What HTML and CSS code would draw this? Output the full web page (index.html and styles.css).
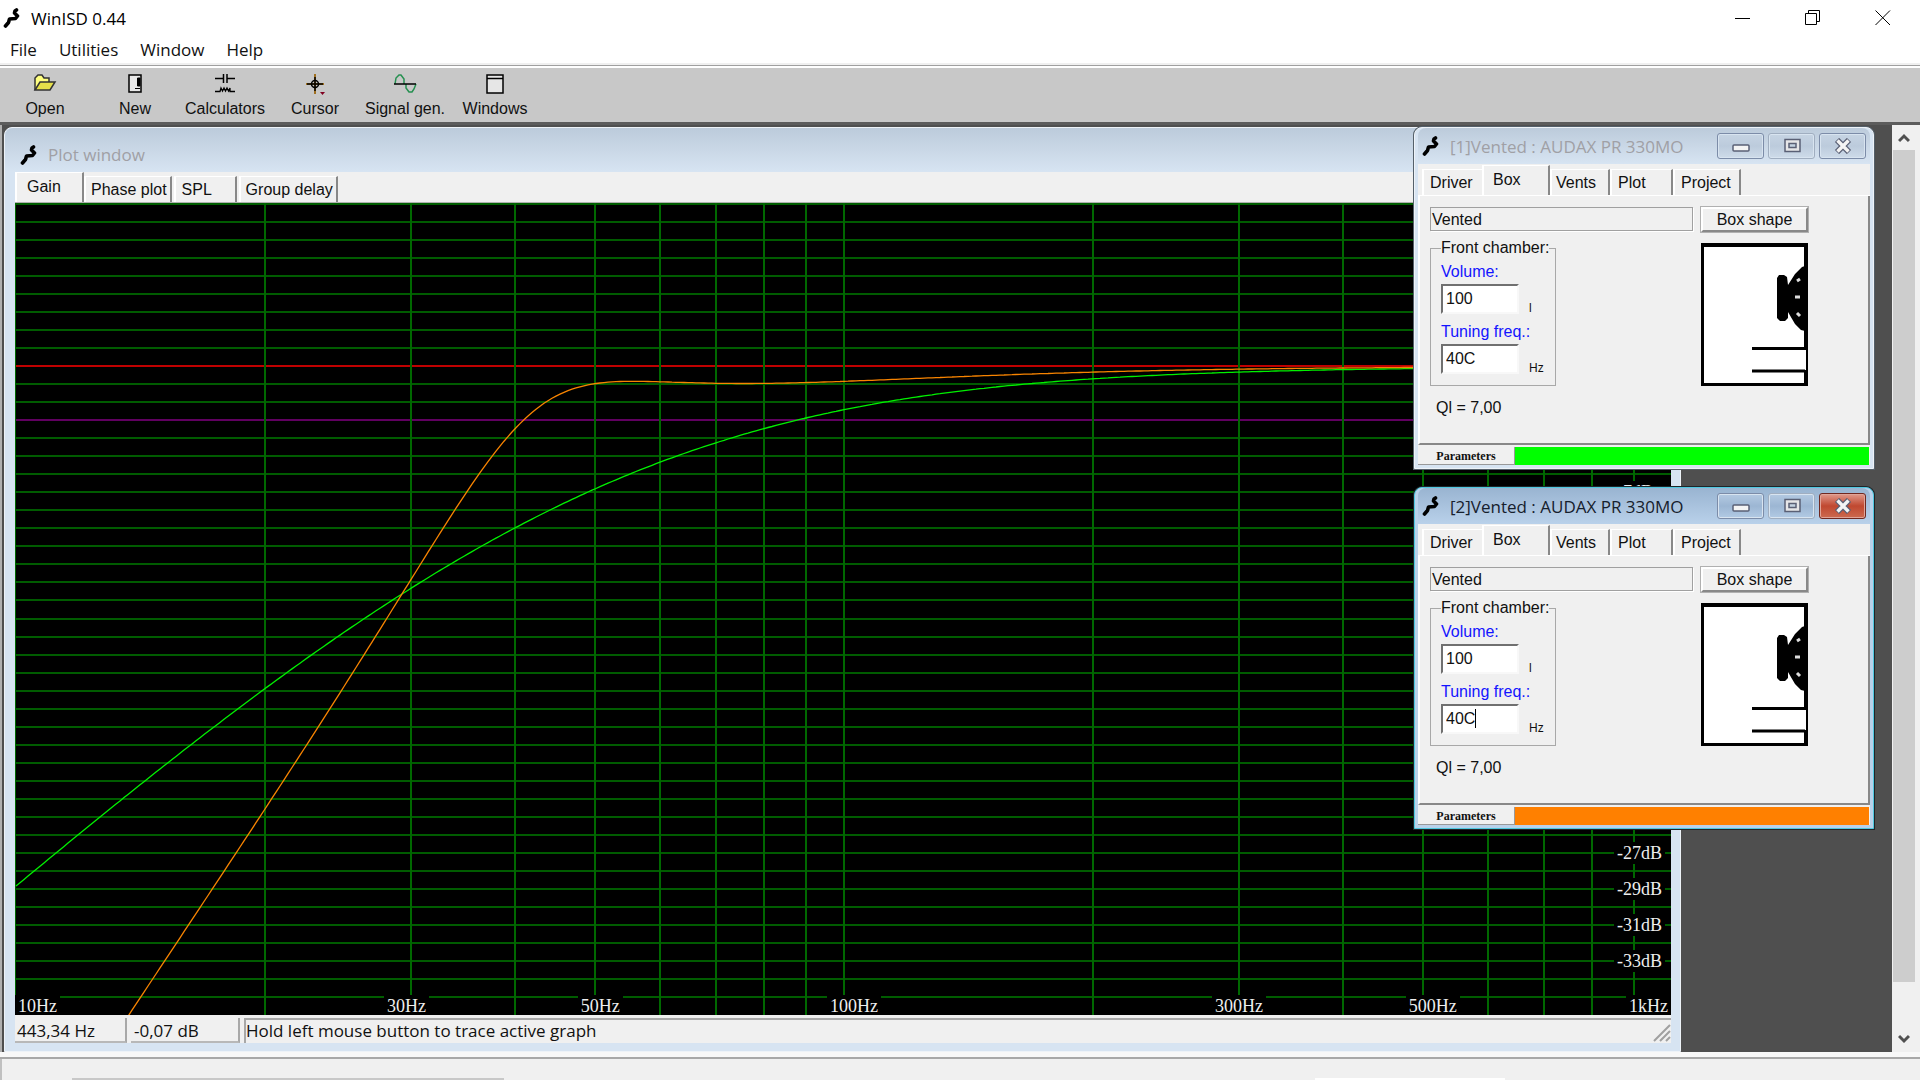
FILE: index.html
```html
<!DOCTYPE html>
<html lang="en">
<head>
<meta charset="utf-8">
<title>WinISD 0.44</title>
<link rel="stylesheet" href="styles.css">
</head>
<body>
<svg class="defs" width="0" height="0" aria-hidden="true">
  <symbol id="logo" viewBox="0 0 18 20">
    <path d="M13.500 2 L12 3 L11.500 5 L14.500 8 L12.500 10.500 L6.500 11 L5.500 14.500 L2.500 18" fill="none" stroke="#000" stroke-width="3.600" stroke-linecap="round" stroke-linejoin="round"/>
  </symbol>
  <symbol id="min" viewBox="0 0 20 16">
    <rect x="2" y="7" width="16" height="6" rx="1" fill="#f4f4f4" stroke="#5a6075" stroke-width="1.500"/>
  </symbol>
  <symbol id="max" viewBox="0 0 20 16">
    <rect x="3" y="1.500" width="15" height="12" fill="#e6e6e8" stroke="#5a6075" stroke-width="1.500"/>
    <rect x="7" y="5.500" width="7" height="4" fill="#c5d3e2" stroke="#5a6075" stroke-width="1.500"/>
  </symbol>
  <symbol id="cross" viewBox="0 0 20 16">
    <path d="M4 2 L16 14 M16 2 L4 14" stroke="#5a6075" stroke-width="6"/>
    <path d="M4.500 2.500 L15.500 13.500 M15.500 2.500 L4.500 13.500" stroke="#f4f4f4" stroke-width="3.400"/>
  </symbol>
  <symbol id="box" viewBox="0 0 107 143">
    <rect width="107" height="143" fill="#000"/>
    <rect x="3" y="4" width="100" height="136" fill="#fff"/>
    <path d="M104 23 L101 24 L94 31 L87 42 L86 34 L83 32 L78 32 L76 35 L76 75 L79 78 L84 78 L87 75 L87 69 L94 81 L100 87 L104 88 Z" fill="#000"/>
    <path d="M96 38 L99 36 M94 54 L99 54 M96 70 L99 73" stroke="#ddd" stroke-width="3"/>
    <rect x="103" y="107" width="2" height="20" fill="#fff"/>
    <path d="M51 105.500 H104 M51 128 H104" stroke="#000" stroke-width="3"/>
  </symbol>
</svg>

<div class="app">
  <header class="titlebar">
    <svg class="logo"><use href="#logo"/></svg>
    <h1>WinISD 0.44</h1>
    <div class="sysbuttons">
      <button aria-label="Minimize"><svg width="16" height="16"><path d="M0 8.500H15" stroke="#000"/></svg></button>
      <button aria-label="Restore"><svg width="16" height="16"><path d="M.5 3.500H11.500V14.500H.5ZM3.500 3.500V.5H14.500V11.500H11.500" fill="none" stroke="#000"/></svg></button>
      <button aria-label="Close"><svg width="16" height="16"><path d="M.5 .5L15 15M15 .5L.5 15" stroke="#000"/></svg></button>
    </div>
  </header>
  <nav class="menu">
    <button>File</button><button>Utilities</button><button>Window</button><button>Help</button>
  </nav>
  <div class="toolbar">
    <button>
      <svg width="24" height="20"><path d="M2 16V4L5 1H9L11 4H16V8" fill="#ffff80" stroke="#333" stroke-width="1.500"/><path d="M2 16L7 8H22L17 16Z" fill="#e6e04a" stroke="#333" stroke-width="1.500"/></svg>
      Open</button>
    <button>
      <svg width="24" height="20"><rect x="6" y="1" width="12" height="17" fill="#e8e8e8" stroke="#000" stroke-width="1.500"/><path d="M14.500 4H17V12H14.500ZM12 14.500H17" fill="#000" stroke="#000"/></svg>
      New</button>
    <button>
      <svg width="24" height="20"><path d="M2 4.500H10M14 4.500H22M10.500 0V9M14 0V9" stroke="#000" stroke-width="1.500"/><path d="M2 17.500H7L8 14L9.500 17L11 14L12.500 17L14 14L15.500 17L17 14V17.500H22" fill="none" stroke="#000" stroke-width="1.300"/></svg>
      Calculators</button>
    <button>
      <svg width="24" height="20"><path d="M12 0V20M3 10H21" stroke="#a07020" stroke-width="2"/><path d="M12 3V17M4 10H20" stroke="#000" stroke-width="1.500"/><circle cx="12" cy="10" r="3.500" fill="none" stroke="#000" stroke-width="1.500"/><path d="M17 18H22L19.500 21Z" fill="#800020"/></svg>
      Cursor</button>
    <button>
      <svg width="26" height="20"><path d="M3 10L4 4L7 1H9L12 5V10M14 10V14L17 18H20L22 15L24 10" fill="none" stroke="#259050" stroke-width="1.500"/><path d="M2 10H24" stroke="#000" stroke-width="1.500"/></svg>
      Signal gen.</button>
    <button>
      <svg width="24" height="20"><rect x="4" y="1" width="16" height="18" fill="#e6e6e6" stroke="#000" stroke-width="1.500"/><path d="M4 4.500H20" stroke="#000" stroke-width="1.500"/></svg>
      Windows</button>
  </div>

  <div class="workspace">
    <main class="canvas">
      <section class="win plotwin">
        <header class="wintitle"><svg class="logo"><use href="#logo"/></svg><h2>Plot window</h2></header>
        <div class="tabs plottabs">
          <button class="tab active">Gain</button><button class="tab">Phase plot</button><button class="tab spl">SPL</button><button class="tab">Group delay</button>
        </div>
        <div class="plot">
          <svg id="graph" viewBox="0 0 1656 812" preserveAspectRatio="none">
            <path id="rows" class="grid rows"/>
            <path id="unity" class="grid unity"/>
            <path id="cutoff" class="grid cutoff"/>
            <path id="cols" class="grid cols"/>
            <polyline id="curve1" class="curve green"/>
            <polyline id="curve2" class="curve orange"/>
          </svg>
          <div id="labels"></div>
        </div>
        <footer class="status">
          <span class="cell freq">443,34 Hz</span><span class="cell level">-0,07 dB</span>
          <span class="cell hint">Hold left mouse button to trace active graph</span>
          <svg class="grip" width="18" height="18"><path d="M1 17L17 1M7 17L17 7M13 17L17 13" stroke="#a0a0a0" stroke-width="2"/></svg>
        </footer>
      </section>

      <section class="win project first">
        <header class="wintitle">
          <svg class="logo"><use href="#logo"/></svg><h2>[1]Vented : AUDAX PR 330MO</h2>
          <div class="winbuttons">
            <button aria-label="Minimize"><svg><use href="#min"/></svg></button><button class="dim" aria-label="Maximize"><svg><use href="#max"/></svg></button><button aria-label="Close"><svg><use href="#cross"/></svg></button>
          </div>
        </header>
        <div class="tabs">
          <button class="tab driver">Driver</button><button class="tab active">Box</button><button class="tab vents">Vents</button><button class="tab plt">Plot</button><button class="tab prj">Project</button>
        </div>
        <div class="page">
          <div class="left">
            <div class="kind">Vented</div>
            <fieldset>
              <legend>Front chamber:</legend>
              <label for="vol1">Volume:</label>
              <div class="field"><input id="vol1" value="100"><small>l</small></div>
              <label for="tun1">Tuning freq.:</label>
              <div class="field"><input id="tun1" value="40C"><small>Hz</small></div>
            </fieldset>
            <p>Ql = 7,00</p>
          </div>
          <div class="right">
            <button class="shape">Box shape</button>
            <svg class="boxpic"><use href="#box"/></svg>
          </div>
        </div>
        <div class="params"><button>Parameters</button><span class="color green"></span></div>
      </section>

      <section class="win project second current">
        <header class="wintitle">
          <svg class="logo"><use href="#logo"/></svg><h2>[2]Vented : AUDAX PR 330MO</h2>
          <div class="winbuttons">
            <button aria-label="Minimize"><svg><use href="#min"/></svg></button><button class="dim" aria-label="Maximize"><svg><use href="#max"/></svg></button><button class="close" aria-label="Close"><svg><use href="#cross"/></svg></button>
          </div>
        </header>
        <div class="tabs">
          <button class="tab driver">Driver</button><button class="tab active">Box</button><button class="tab vents">Vents</button><button class="tab plt">Plot</button><button class="tab prj">Project</button>
        </div>
        <div class="page">
          <div class="left">
            <div class="kind">Vented</div>
            <fieldset>
              <legend>Front chamber:</legend>
              <label for="vol2">Volume:</label>
              <div class="field"><input id="vol2" value="100"><small>l</small></div>
              <label for="tun2">Tuning freq.:</label>
              <div class="field"><input id="tun2" value="40C"><i class="caret"></i><small>Hz</small></div>
            </fieldset>
            <p>Ql = 7,00</p>
          </div>
          <div class="right">
            <button class="shape">Box shape</button>
            <svg class="boxpic"><use href="#box"/></svg>
          </div>
        </div>
        <div class="params"><button>Parameters</button><span class="color orange"></span></div>
      </section>
    </main>
    <div class="scroll">
      <button aria-label="Scroll up"><svg width="12" height="10"><path d="M1 8L6 3L11 8" fill="none" stroke="#505050" stroke-width="3"/></svg></button>
      <div class="track"><div class="thumb"></div></div>
      <button aria-label="Scroll down"><svg width="12" height="10"><path d="M1 2L6 7L11 2" fill="none" stroke="#505050" stroke-width="3"/></svg></button>
    </div>
  </div>
  <footer class="appstatus"><span class="edge gray"></span><span class="edge white"></span></footer>
</div>
<script src="plot.js"></script>
</body>
</html>
```
FILE: plot.js
```js
// Plot area: 10 Hz to 1 kHz on a log axis, +9 dB to -36 dB.
const W = 1656, H = 812, ROW = 812 / 45;
const x = f => W * Math.log10(f / 10) / 2;
const y = db => (9 - db) * ROW;
const set = (id, name, v) => document.getElementById(id).setAttribute(name, v);

let rows = '';
for (let db = 9; db >= -35; db--) {
  if (db !== 0 && db !== -3) rows += `M0 ${Math.floor(y(db)) + 1}H${W}`;
}
set('rows', 'd', rows);
set('unity', 'd', `M0 ${Math.floor(y(0)) + 1}H${W}`);
set('cutoff', 'd', `M0 ${Math.floor(y(-3)) + 1}H${W}`);

let cols = `M0 0V${H}`;
for (const decade of [10, 100]) {
  for (let k = 2; k <= 10; k++) {
    if (decade * k < 1000) cols += `M${Math.round(x(decade * k)) + 1} 0V${H}`;
  }
}
set('cols', 'd', cols);

// High-pass response given by the polynomial of 1/|H|^2 in u = (50/f)^2.
function curve(coef) {
  const pts = [];
  for (let px = 0; px <= W; px += 4) {
    const f = 10 * Math.pow(10, 2 * px / W);
    const u = 2500 / (f * f);
    let g = 1;
    coef.forEach((c, i) => { g += c * Math.pow(u, i + 1); });
    pts.push((px + 1) + ',' + (y(-10 * Math.log10(g)) + 1).toFixed(1));
  }
  return pts.join(' ');
}
set('curve1', 'points', curve([2.676, 1.105]));
set('curve2', 'points', curve([1.353, -2.357, 1.205, 0.0462]));

const box = document.getElementById('labels');
function label(text, cls, prop, value) {
  const s = document.createElement('span');
  s.textContent = text;
  s.className = cls;
  s.style[prop] = value + '%';
  box.append(s);
}
label('10Hz', 'hz start', 'left', 0);
for (const [f, t, side] of [[30, '30Hz', ''], [50, '50Hz', ' near'], [100, '100Hz', ' near'], [300, '300Hz', ''], [500, '500Hz', ' near']]) {
  label(t, 'hz' + side, 'left', 100 * x(f) / W);
}
label('1kHz', 'hz end', 'left', 100);
for (const db of [-7, -27, -29, -31, -33]) label(db + 'dB', 'db', 'top', 100 * y(db) / H);
```
FILE: styles.css
```css
* { box-sizing: border-box; }
body {
  margin: 0;
  background: #f0f0f0;
  color: #111;
  font-family: "Liberation Sans", Arial, sans-serif;
  font-size: 16px;
}
button, input { font: inherit; color: inherit; }
button { margin: 0; padding: 0; border: 0; background: none; }
h1, h2, p { margin: 0; font-weight: 400; }
.defs { position: absolute; }
.logo { width: 18px; height: 20px; flex: none; }

.app { display: flex; flex-direction: column; height: 100vh; min-height: 900px; }

/* Title, menu and toolbar */
.titlebar {
  display: flex;
  align-items: center;
  gap: 10px;
  height: 36px;
  padding-left: 3px;
  background: #fff;
}
.titlebar h1, .menu, .wintitle h2, .status { font-family: "Open Sans", "Noto Sans", sans-serif; font-size: 17px; }
.titlebar h1 { flex: 1; color: #000; }
.sysbuttons { display: flex; padding-right: 2px; }
.sysbuttons button { width: 70px; height: 34px; display: grid; place-items: center; }
.menu {
  display: flex;
  gap: 22px;
  height: 29px;
  padding: 0 10px 1px;
  background: #fff;
  border-bottom: 2px solid #f0f0f0;
}
.toolbar {
  display: flex;
  height: 60px;
  padding: 4px 0 0;
  background: #c8c8c8;
  border-top: 1px solid #a0a0a0;
  border-bottom: 3px solid #5c5c5c;
  box-shadow: inset 0 2px #fff;
}
.toolbar button {
  display: flex;
  flex-direction: column;
  align-items: center;
  gap: 6px;
  width: 90px;
  height: 52px;
  padding-top: 4px;
  white-space: nowrap;
}
.toolbar svg { overflow: visible; flex: none; }

/* MDI area */
.workspace { display: flex; flex: 1; min-height: 0; border-left: 2px solid #b0b0b0; border-right: 5px solid #f0f0f0; }
.canvas { position: relative; flex: 1; background: #4f4f4f; overflow: hidden; }
.scroll { display: flex; flex-direction: column; width: 23px; background: #f0f0f0; }
.scroll button { height: 25px; display: grid; place-items: center; }
.scroll button:last-child { height: 26px; }
.track { flex: 1; }
.thumb { height: 95%; margin-left: 1px; background: #cdcdcd; }
.appstatus {
  display: flex;
  align-items: flex-end;
  height: 28px;
  border-top: 5px solid #f8f8f8;
  box-shadow: inset 0 2px #a8a8a8, inset 2px 0 #c0c0c0;
}
.edge { height: 2px; }
.edge.gray { width: 432px; margin-left: 72px; background: #c8c8c8; }
.edge.white { width: 190px; margin-left: 811px; background: #fff; }

/* Windows */
.win {
  position: absolute;
  display: flex;
  flex-direction: column;
  background: #d7e4f2;
  border: 1px solid #eef3f8;
  border-radius: 8px 8px 0 0;
}
.wintitle {
  display: flex;
  align-items: center;
  flex: none;
  border-radius: 8px 8px 0 0;
  background: linear-gradient(#bccbdb, #d7e4f2);
}
.wintitle h2 { flex: 1; color: #a0a0a5; white-space: nowrap; }
.tabs { display: flex; align-items: flex-end; background: #f0f0f0; flex: none; }
.tab {
  height: 26px;
  padding: 0 3px 0 5px;
  text-align: left;
  border-top: 1px solid #fff;
  border-left: 2px solid #fff;
  border-right: 2px solid #888;
  white-space: nowrap;
}
.tab.active { height: 30px; padding-bottom: 2px; }

.plotwin { left: 2px; right: 211px; top: 2px; bottom: 0; padding: 0 9px 8px 10px; }
.plotwin .wintitle { height: 44px; gap: 10px; margin: 0 -9px 0 -10px; padding: 9px 0 0 15px; }
.plottabs { height: 31px; border-bottom: 1px solid #b0b0b0; }
.plottabs .active { width: 69px; padding-left: 10px; }
.tab.spl { width: 63px; padding-left: 6px; margin: 0 2px; }
.plot { position: relative; flex: 1; min-height: 0; background: #000; overflow: hidden; }
#graph { display: block; width: 100%; height: 100%; }
.grid { fill: none; stroke-width: 2; vector-effect: non-scaling-stroke; shape-rendering: crispEdges; }
.rows { stroke: #005c00; }
.cols { stroke: #006800; }
.unity { stroke: #c00000; }
.cutoff { stroke: #600060; }
.curve { fill: none; stroke-width: 1.3; vector-effect: non-scaling-stroke; }
.curve.green { stroke: #00f000; }
.curve.orange { stroke: #f88400; }
#labels span {
  position: absolute;
  padding: 0 3px;
  background: #000;
  color: #eee;
  font: 18px/22px "Liberation Serif", "Times New Roman", serif;
}
#labels .hz { bottom: -2px; margin-left: -26px; line-height: 22px; }
#labels .near { margin-left: -16px; }
#labels .start { margin-left: 0; }
#labels .end { margin-left: 0; transform: translateX(-100%); }
#labels .db { right: 6px; width: 51px; transform: translateY(-50%); }

.status { position: relative; display: flex; gap: 4px; height: 28px; padding-top: 3px; background: #f0f0f0; flex: none; }
.cell { height: 25px; line-height: 25px; padding-left: 2px; white-space: nowrap; border-right: 2px solid #a8a8a8; border-bottom: 2px solid #b8b8b8; }
.freq { width: 112px; }
.level { width: 109px; padding-left: 3px; }
.hint { flex: 1; padding-left: 0; border: 0; border-left: 2px solid #a8a8a8; border-top: 2px solid #a8a8a8; line-height: 22px; }
.grip { position: absolute; right: 0; bottom: 1px; }

/* Project windows */
.project { right: 18px; width: 460px; padding: 0 3px 3px; box-shadow: 0 0 0 1px #55606a; }
.first { top: 2px; }
.second { top: 362px; }
.current { background: #b9d1ea; border-color: #50c8e0; box-shadow: 0 0 0 1px #202428; }
.current .wintitle { background: linear-gradient(#99b4d1, #b9d1ea); }
.current .wintitle h2 { color: #16202c; }
.project .wintitle { height: 36px; gap: 10px; padding: 0 4px 0 4px; }
.winbuttons { display: flex; gap: 4px; }
.winbuttons button {
  width: 47px;
  height: 26px;
  display: grid;
  place-items: center;
  border: 1px solid #7c8ca8;
  border-radius: 3px;
  background: linear-gradient(#c6d4e3, #bccbdc 50%, #cedbe9);
  box-shadow: inset 0 0 0 1px #d8e4f0;
}
.winbuttons .dim { border-color: #a0aec0; }
.winbuttons svg { width: 20px; height: 16px; }
.current .winbuttons button { background: linear-gradient(#b4cae2, #9cb6d3 50%, #b2cae4); }
.current .winbuttons .close { background: linear-gradient(#e09a8c, #c04830 50%, #cc6a50); border-color: #702820; box-shadow: inset 0 0 0 1px #e0a498; }
.project .tabs { height: 32px; padding-left: 4px; border-bottom: 1px solid #fff; }
.project .tab.active { width: 68px; padding-left: 9px; }
.driver { width: 60px; padding-left: 6px; border-right: 0; }
.vents { width: 60px; padding-left: 4px; }
.plt { width: 63px; padding-left: 6px; }
.prj { width: 68px; padding-left: 6px; }
.page {
  display: flex;
  gap: 8px;
  height: 249px;
  padding: 11px 0 0 10px;
  background: #f0f0f0;
  border-left: 2px solid #fff;
  border-right: 2px solid #888;
  border-bottom: 2px solid #888;
}
.left { width: 263px; }
.kind { height: 24px; padding-left: 1px; line-height: 24px; border: 1px solid #a0a0a0; box-shadow: 1px 1px #fff; }
.project fieldset {
  width: 126px;
  height: 147px;
  margin: 8px 0 0;
  padding: 3px 0 0 10px;
  border: 1px solid #a8a8a8;
}
legend { padding: 0; line-height: 18px; }
label { display: block; height: 24px; line-height: 23px; color: #1414ff; }
.field { position: relative; display: flex; align-items: flex-end; gap: 10px; height: 30px; margin-bottom: 6px; }
.field input {
  width: 78px;
  height: 30px;
  padding: 0 3px 1px;
  border: 2px solid;
  border-color: #707070 #f8f8f8 #f8f8f8 #707070;
  background: #fff;
  outline: 0;
}
small { font-size: 12px; line-height: 12px; }
.caret { position: absolute; left: 34px; top: 5px; width: 1px; height: 19px; background: #000; }
.left p { margin: 12px 0 0 6px; line-height: 20px; }
.right { display: flex; flex-direction: column; gap: 11px; }
.shape {
  width: 107px;
  height: 25px;
  padding-top: 1px;
  border: 2px solid;
  border-color: #fff #888 #888 #fff;
  box-shadow: 0 0 0 1px #b0b0b0;
}
.boxpic { width: 107px; height: 143px; }
.params { display: flex; height: 20px; padding-top: 2px; background: #f0f0f0; }
.params button { width: 97px; font: bold 12px/16px "Liberation Serif", serif; border-right: 1px solid #999; border-bottom: 1px solid #999; }
.color { flex: 1; margin-right: 1px; }
.color.green { background: #0f0; }
.color.orange { background: #ff8000; }
```
